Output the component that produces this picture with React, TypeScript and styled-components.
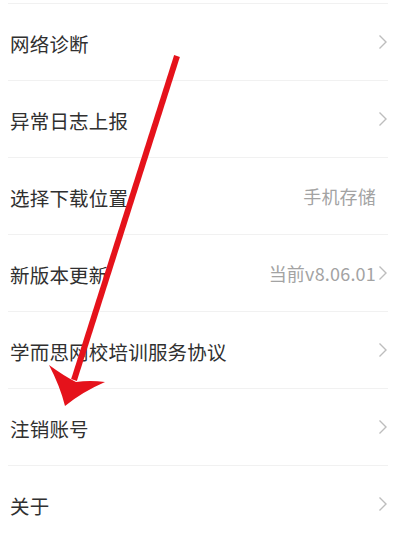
import React from 'react'
import styled, { createGlobalStyle } from 'styled-components'

const GlobalStyle = createGlobalStyle`
  html, body {
    margin: 0;
    padding: 0;
    background: #ffffff;
  }
  body {
    width: 404px;
    height: 542px;
    overflow: hidden;
    font-family: "Noto Sans CJK SC", "Noto Sans", sans-serif;
  }
`

const Page = styled.div`
  position: relative;
  width: 404px;
  height: 542px;
  background: #ffffff;
  padding-top: 3px;
  box-sizing: border-box;
`

const List = styled.div`
  display: flex;
  flex-direction: column;
  border-top: 1px solid #f1f1f1;
  margin: 0 16px 0 8px;
`

const Row = styled.div`
  display: flex;
  align-items: center;
  justify-content: space-between;
  height: 76px;
  border-bottom: 1px solid #f1f1f1;
  padding: 0 0 0 2px;
`

const Label = styled.span`
  font-size: 19.5px;
  color: #303030;
  letter-spacing: 0.2px;
  padding-top: 2px;
`

const Trail = styled.div<{ $pad: boolean }>`
  display: flex;
  align-items: center;
  gap: 1px;
  margin-right: ${(p) => (p.$pad ? '12px' : '0')};
`

const Value = styled.span`
  font-size: 18px;
  color: #a3a3a3;
  letter-spacing: 0.2px;
`

const Chevron = () => (
  <svg width="11" height="18" viewBox="0 0 11 18">
    <path d="M2.5 2.5 L9 9 L2.5 15.5" fill="none" stroke="#bdbdbd" strokeWidth="1.4" />
  </svg>
)

const Arrow = styled.svg`
  position: absolute;
  left: 0;
  top: 0;
  pointer-events: none;
`

type Item = { label: string; value?: string; chevron: boolean }

const items: Item[] = [
  { label: '网络诊断', chevron: true },
  { label: '异常日志上报', chevron: true },
  { label: '选择下载位置', value: '手机存储', chevron: false },
  { label: '新版本更新', value: '当前v8.06.01', chevron: true },
  { label: '学而思网校培训服务协议', chevron: true },
  { label: '注销账号', chevron: true },
  { label: '关于', chevron: true },
]

export default function App() {
  return (
    <Page>
      <GlobalStyle />
      <List>
        {items.map((it) => (
          <Row key={it.label}>
            <Label>{it.label}</Label>
            <Trail $pad={!it.chevron}>
              {it.value && <Value>{it.value}</Value>}
              {it.chevron && <Chevron />}
            </Trail>
          </Row>
        ))}
      </List>
      <Arrow width="404" height="542" viewBox="0 0 404 542">
        <line x1="177" y1="56" x2="74" y2="380" stroke="#e5121b" strokeWidth="6" strokeLinecap="butt" />
        <path
          d="M65 406 Q60 386 49 365 Q64 376 76 382 Q90 380 105 382 Q82 392 65 406 Z"
          fill="#e5121b"
        />
      </Arrow>
    </Page>
  )
}
